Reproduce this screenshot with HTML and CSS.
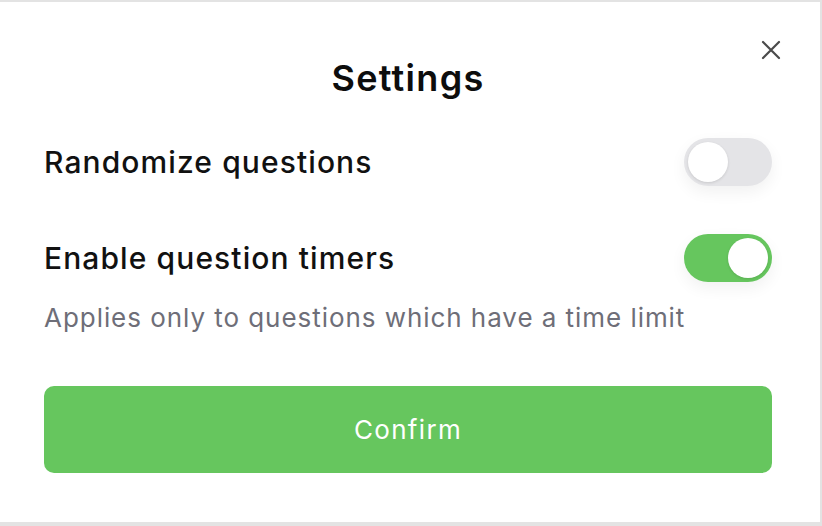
FILE: index.html
```html
<!DOCTYPE html>
<html lang="en">
<head>
<meta charset="utf-8">
<title>Settings</title>
<link rel="stylesheet" href="styles.css">
</head>
<body>
<div class="dialog">
  <button class="close" aria-label="Close">
    <svg width="20" height="20" viewBox="0 0 20 20"><path d="M2 2 L18 18 M18 2 L2 18" stroke="#4a4a4a" stroke-width="2.2" stroke-linecap="round" fill="none"/></svg>
  </button>
  <h1 class="title">Settings</h1>
  <div class="row">
    <span class="label">Randomize questions</span>
    <span class="toggle"><span class="knob"></span></span>
  </div>
  <div class="row">
    <span class="label">Enable question timers</span>
    <span class="toggle on"><span class="knob"></span></span>
  </div>
  <p class="hint">Applies only to questions which have a time limit</p>
  <button class="confirm">Confirm</button>
</div>
</body>
</html>
```
FILE: styles.css
```css
html, body { margin: 0; padding: 0; }
body {
  background: #e3e3e3;
  padding: 2px 2px 4px 0;
  font-family: Inter, "Noto Sans", sans-serif;
  color: #111;
}
.dialog {
  position: relative;
  background: #fff;
  height: 520px;
  box-sizing: border-box;
  padding: 54px 48px 0 44px;
  display: flex;
  flex-direction: column;
}
.close {
  position: absolute;
  top: 38px;
  right: 39px;
  width: 20px;
  height: 20px;
  padding: 0;
  border: 0;
  background: none;
  display: flex;
}
.title {
  margin: 0;
  text-align: center;
  font-size: 36px;
  font-weight: 600;
  letter-spacing: 1.3px;
  line-height: 44px;
  color: #0d0d0d;
}
.row {
  display: flex;
  align-items: center;
  justify-content: space-between;
  height: 48px;
}
.row:first-of-type { margin-top: 38px; }
.row + .row { margin-top: 48px; }
.label {
  font-size: 30px;
  font-weight: 500;
  letter-spacing: 1.1px;
  color: #111;
}
.toggle {
  width: 88px;
  height: 48px;
  border-radius: 24px;
  background: #e4e4e7;
  box-sizing: border-box;
  padding: 4px;
  display: flex;
  box-shadow: 0 6px 16px rgba(0,0,0,0.06);
}
.toggle.on {
  background: #66c65e;
  justify-content: flex-end;
}
.knob {
  width: 40px;
  height: 40px;
  border-radius: 50%;
  background: #fff;
  box-shadow: 0 1px 3px rgba(0,0,0,0.12);
}
.hint {
  margin: 20px 0 0;
  font-size: 26px;
  letter-spacing: 0.95px;
  line-height: 32px;
  color: #6e6e78;
}
.confirm {
  margin-top: 52px;
  height: 87px;
  border: 0;
  border-radius: 10px;
  background: #66c65e;
  color: #fff;
  font-family: Inter, "Noto Sans", sans-serif;
  font-size: 26px;
  font-weight: 400;
  letter-spacing: 1.3px;
}
```
